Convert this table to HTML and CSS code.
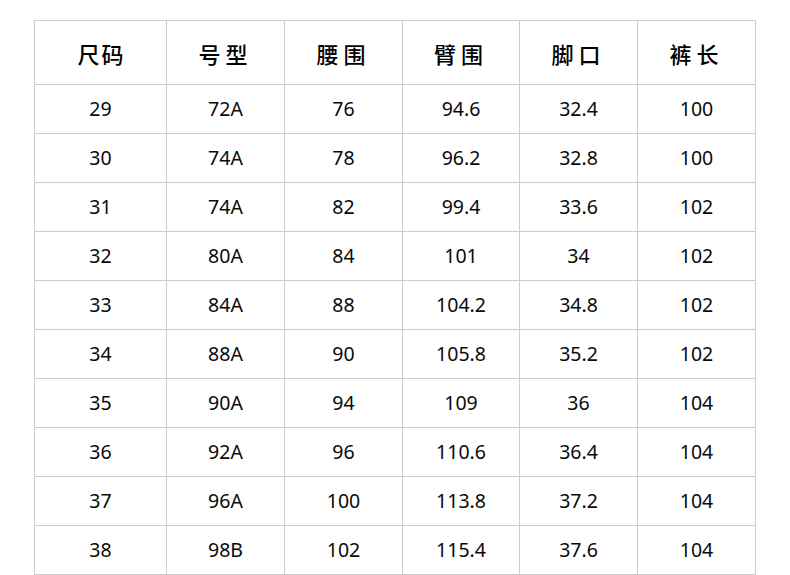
FILE: index.html
```html
<!DOCTYPE html>
<html lang="zh">
<head>
<meta charset="utf-8">
<link rel="stylesheet" href="styles.css">
</head>
<body>
<table class="size-table">
  <colgroup>
    <col class="c1"><col class="c2"><col class="c3"><col class="c4"><col class="c5"><col class="c6">
  </colgroup>
  <thead>
    <tr><th class="tight">尺码</th><th>号型</th><th>腰围</th><th>臂围</th><th>脚口</th><th>裤长</th></tr>
  </thead>
  <tbody>
    <tr><td>29</td><td>72A</td><td>76</td><td>94.6</td><td>32.4</td><td>100</td></tr>
    <tr><td>30</td><td>74A</td><td>78</td><td>96.2</td><td>32.8</td><td>100</td></tr>
    <tr><td>31</td><td>74A</td><td>82</td><td>99.4</td><td>33.6</td><td>102</td></tr>
    <tr><td>32</td><td>80A</td><td>84</td><td>101</td><td>34</td><td>102</td></tr>
    <tr><td>33</td><td>84A</td><td>88</td><td>104.2</td><td>34.8</td><td>102</td></tr>
    <tr><td>34</td><td>88A</td><td>90</td><td>105.8</td><td>35.2</td><td>102</td></tr>
    <tr><td>35</td><td>90A</td><td>94</td><td>109</td><td>36</td><td>104</td></tr>
    <tr><td>36</td><td>92A</td><td>96</td><td>110.6</td><td>36.4</td><td>104</td></tr>
    <tr><td>37</td><td>96A</td><td>100</td><td>113.8</td><td>37.2</td><td>104</td></tr>
    <tr><td>38</td><td>98B</td><td>102</td><td>115.4</td><td>37.6</td><td>104</td></tr>
  </tbody>
</table>
</body>
</html>
```

FILE: styles.css
```css
html, body {
  margin: 0;
  padding: 0;
  background: #ffffff;
}
body {
  padding: 20px 0 0 34px;
  font-family: "Noto Sans", "Noto Sans CJK SC", sans-serif;
  color: #0a0a0a;
}
.size-table {
  border-collapse: collapse;
  table-layout: fixed;
  width: 722px;
}
.c1 { width: 132px; }
.c2 { width: 118px; }
.c3 { width: 118px; }
.c4 { width: 117px; }
.c5 { width: 118px; }
.c6 { width: 118px; }
.size-table th,
.size-table td {
  border: 1px solid #cccccc;
  padding: 0;
  text-align: center;
  vertical-align: middle;
}
.size-table th {
  height: 63px;
  font-family: "Noto Sans CJK SC", sans-serif;
  font-size: 22px;
  font-weight: 500;
  letter-spacing: 5px;
  color: #000000;
}
.size-table th.tight {
  letter-spacing: 2px;
  text-indent: 2px;
}
.size-table td {
  height: 46px;
  padding-bottom: 2px;
  font-size: 19.5px;
  font-weight: 400;
}
```
